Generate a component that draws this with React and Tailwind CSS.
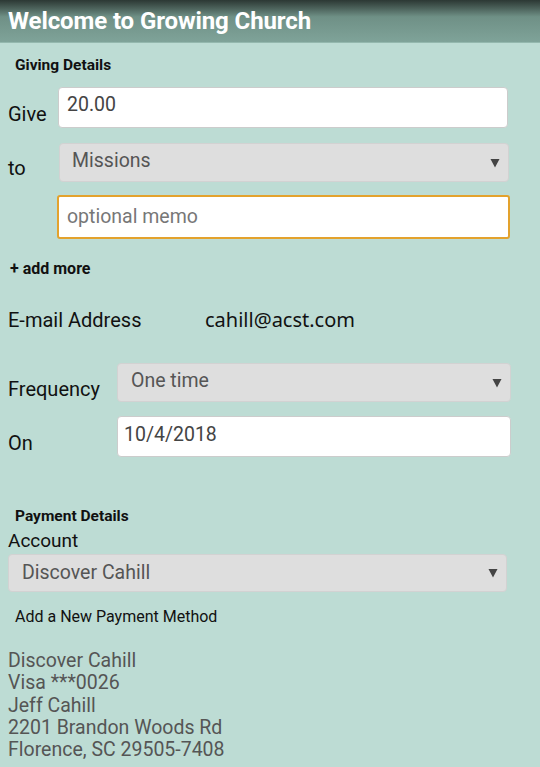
export default function App() {
  const arrow = (
    <svg className="absolute right-[8px] top-1/2 -translate-y-1/2" width="10" height="10" viewBox="0 0 10 10">
      <path d="M0.5 1h9L5 9.5z" fill="#444" />
    </svg>
  );

  return (
    <div className="min-h-[767px] bg-[#bddcd4] font-['Roboto',sans-serif] text-[#111]">
      <header className="h-[43px] bg-gradient-to-b from-[#2c3834] via-[#6f9086] via-40% to-[#7fa399] border-b border-[#94b8ae] px-2 flex items-center">
        <h1 className="text-[24px] font-bold text-white leading-none tracking-[-0.1px]">Welcome to Growing Church</h1>
      </header>

      <div className="pt-[13px]">
        <h2 className="pl-[15px] text-[15.5px] font-bold leading-[18px]">Giving Details</h2>

        <div className="flex items-end mt-[13px] pl-2">
          <span className="w-[50px] text-[20px] leading-[22px] pb-[3px]">Give</span>
          <div className="w-[450px] h-[41px] bg-white border border-[#ccc] rounded-[4px] px-2 pt-[5px] text-[19.5px] text-[#444] leading-[24px]">20.00</div>
        </div>

        <div className="flex items-end mt-[15px] pl-2">
          <span className="w-[51px] text-[20px] leading-[22px] pb-[3px]">to</span>
          <div className="relative w-[450px] h-[39px] bg-[#dedede] border border-[#d2d2d2] rounded-[4px] pl-[12px] pt-[6px] text-[19.5px] text-[#555] leading-[22px]">
            Missions
            {arrow}
          </div>
        </div>

        <div className="mt-[13px] ml-[57px] w-[453px] h-[44px] bg-white border-2 border-[#e3a22d] rounded-[3px] px-2 flex items-center text-[19.5px] text-[#777] leading-[22px]">optional memo</div>

        <p className="mt-[21px] pl-[10px] text-[16px] font-bold leading-[18px]">+ add more</p>

        <div className="flex items-center mt-[31px] pl-2 text-[20px] leading-[22px]">
          <span className="w-[197px]">E-mail Address</span>
          <span className="font-['Noto_Sans',sans-serif] text-[20px]">cahill@acst.com</span>
        </div>

        <div className="flex items-end mt-[32px] pl-2">
          <span className="w-[109px] text-[20px] leading-[22px] pb-[2px]">Frequency</span>
          <div className="relative w-[394px] h-[39px] bg-[#dedede] border border-[#d2d2d2] rounded-[4px] pl-[13px] pt-[6px] text-[19.5px] text-[#555] leading-[22px]">
            One time
            {arrow}
          </div>
        </div>

        <div className="flex items-end mt-[14px] pl-2">
          <span className="w-[109px] text-[20px] leading-[22px] pb-[3px]">On</span>
          <div className="w-[394px] h-[41px] bg-white border border-[#ccc] rounded-[4px] px-[6px] pt-[7px] text-[19.5px] text-[#444] leading-[22px]">10/4/2018</div>
        </div>

        <h2 className="mt-[50px] pl-[15px] text-[15.5px] font-bold leading-[18px]">Payment Details</h2>
        <p className="pl-2 text-[19px] leading-[24px] mt-[4px]">Account</p>
        <div className="ml-2 mt-[1px] relative w-[499px] h-[38px] bg-[#dedede] border border-[#d2d2d2] rounded-[4px] pl-[13px] pt-[7px] text-[19.5px] text-[#555] leading-[22px]">
          Discover Cahill
          {arrow}
        </div>

        <p className="mt-[16px] pl-[15px] text-[16px] leading-[18px]">Add a New Payment Method</p>

        <div className="mt-[24px] pl-2 text-[19.5px] leading-[22.3px] text-[#555]">
          <p>Discover Cahill</p>
          <p>Visa ***0026</p>
          <p>Jeff Cahill</p>
          <p>2201 Brandon Woods Rd</p>
          <p>Florence, SC 29505-7408</p>
        </div>
      </div>
    </div>
  );
}
